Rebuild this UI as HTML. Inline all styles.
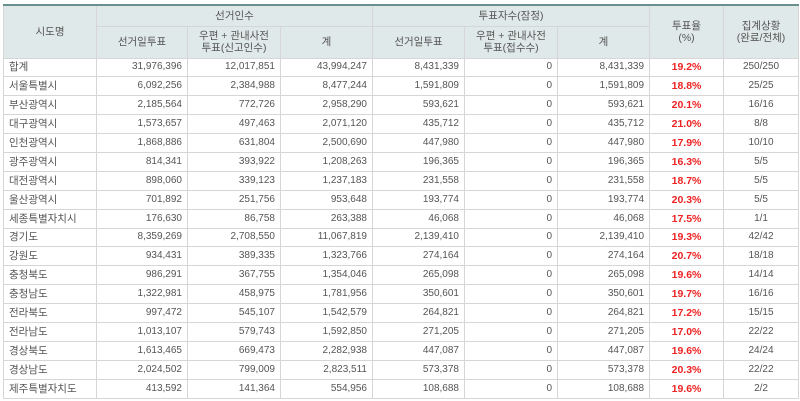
<!DOCTYPE html>
<html><head><meta charset="utf-8"><style>
body{margin:0;background:#fff;width:800px;height:401px;overflow:hidden;font-family:"Liberation Sans","Noto Sans CJK KR",sans-serif;}
table{position:absolute;left:3px;top:4px;width:795px;border-collapse:collapse;table-layout:fixed;font-size:10px;color:#555;border-top:2px solid #6a8f8f;}
td,th{border:1px solid #d6d6d6;padding:0 5px;white-space:nowrap;overflow:hidden;vertical-align:middle;line-height:12px;}
th{background:#e0e9e9;font-weight:normal;color:#555;text-align:center;font-size:10.5px;}
tbody td{height:17.9px;text-align:right;}
tbody td:first-child{text-align:left;font-size:10.5px;}
td.r{color:#ee2222;font-weight:bold;text-align:center;font-size:10.5px;}
td.c{text-align:center;}
</style></head><body>
<table>
<colgroup><col style="width:93px"><col style="width:91px"><col style="width:93px"><col style="width:92px"><col style="width:92px"><col style="width:93px"><col style="width:92px"><col style="width:74px"><col style="width:75px"></colgroup>
<thead>
<tr style="height:21px"><th rowspan="2">시도명</th><th colspan="3">선거인수</th><th colspan="3">투표자수(잠정)</th><th rowspan="2">투표율<br>(%)</th><th rowspan="2">집계상황<br>(완료/전체)</th></tr>
<tr style="height:32px"><th>선거일투표</th><th>우편 + 관내사전<br>투표(신고인수)</th><th>계</th><th>선거일투표</th><th>우편 + 관내사전<br>투표(접수수)</th><th>계</th></tr>
</thead>
<tbody>
<tr><td>합계</td><td>31,976,396</td><td>12,017,851</td><td>43,994,247</td><td>8,431,339</td><td>0</td><td>8,431,339</td><td class="r">19.2%</td><td class="c">250/250</td></tr>
<tr><td>서울특별시</td><td>6,092,256</td><td>2,384,988</td><td>8,477,244</td><td>1,591,809</td><td>0</td><td>1,591,809</td><td class="r">18.8%</td><td class="c">25/25</td></tr>
<tr><td>부산광역시</td><td>2,185,564</td><td>772,726</td><td>2,958,290</td><td>593,621</td><td>0</td><td>593,621</td><td class="r">20.1%</td><td class="c">16/16</td></tr>
<tr><td>대구광역시</td><td>1,573,657</td><td>497,463</td><td>2,071,120</td><td>435,712</td><td>0</td><td>435,712</td><td class="r">21.0%</td><td class="c">8/8</td></tr>
<tr><td>인천광역시</td><td>1,868,886</td><td>631,804</td><td>2,500,690</td><td>447,980</td><td>0</td><td>447,980</td><td class="r">17.9%</td><td class="c">10/10</td></tr>
<tr><td>광주광역시</td><td>814,341</td><td>393,922</td><td>1,208,263</td><td>196,365</td><td>0</td><td>196,365</td><td class="r">16.3%</td><td class="c">5/5</td></tr>
<tr><td>대전광역시</td><td>898,060</td><td>339,123</td><td>1,237,183</td><td>231,558</td><td>0</td><td>231,558</td><td class="r">18.7%</td><td class="c">5/5</td></tr>
<tr><td>울산광역시</td><td>701,892</td><td>251,756</td><td>953,648</td><td>193,774</td><td>0</td><td>193,774</td><td class="r">20.3%</td><td class="c">5/5</td></tr>
<tr><td>세종특별자치시</td><td>176,630</td><td>86,758</td><td>263,388</td><td>46,068</td><td>0</td><td>46,068</td><td class="r">17.5%</td><td class="c">1/1</td></tr>
<tr><td>경기도</td><td>8,359,269</td><td>2,708,550</td><td>11,067,819</td><td>2,139,410</td><td>0</td><td>2,139,410</td><td class="r">19.3%</td><td class="c">42/42</td></tr>
<tr><td>강원도</td><td>934,431</td><td>389,335</td><td>1,323,766</td><td>274,164</td><td>0</td><td>274,164</td><td class="r">20.7%</td><td class="c">18/18</td></tr>
<tr><td>충청북도</td><td>986,291</td><td>367,755</td><td>1,354,046</td><td>265,098</td><td>0</td><td>265,098</td><td class="r">19.6%</td><td class="c">14/14</td></tr>
<tr><td>충청남도</td><td>1,322,981</td><td>458,975</td><td>1,781,956</td><td>350,601</td><td>0</td><td>350,601</td><td class="r">19.7%</td><td class="c">16/16</td></tr>
<tr><td>전라북도</td><td>997,472</td><td>545,107</td><td>1,542,579</td><td>264,821</td><td>0</td><td>264,821</td><td class="r">17.2%</td><td class="c">15/15</td></tr>
<tr><td>전라남도</td><td>1,013,107</td><td>579,743</td><td>1,592,850</td><td>271,205</td><td>0</td><td>271,205</td><td class="r">17.0%</td><td class="c">22/22</td></tr>
<tr><td>경상북도</td><td>1,613,465</td><td>669,473</td><td>2,282,938</td><td>447,087</td><td>0</td><td>447,087</td><td class="r">19.6%</td><td class="c">24/24</td></tr>
<tr><td>경상남도</td><td>2,024,502</td><td>799,009</td><td>2,823,511</td><td>573,378</td><td>0</td><td>573,378</td><td class="r">20.3%</td><td class="c">22/22</td></tr>
<tr><td>제주특별자치도</td><td>413,592</td><td>141,364</td><td>554,956</td><td>108,688</td><td>0</td><td>108,688</td><td class="r">19.6%</td><td class="c">2/2</td></tr>
</tbody>
</table>
</body></html>
